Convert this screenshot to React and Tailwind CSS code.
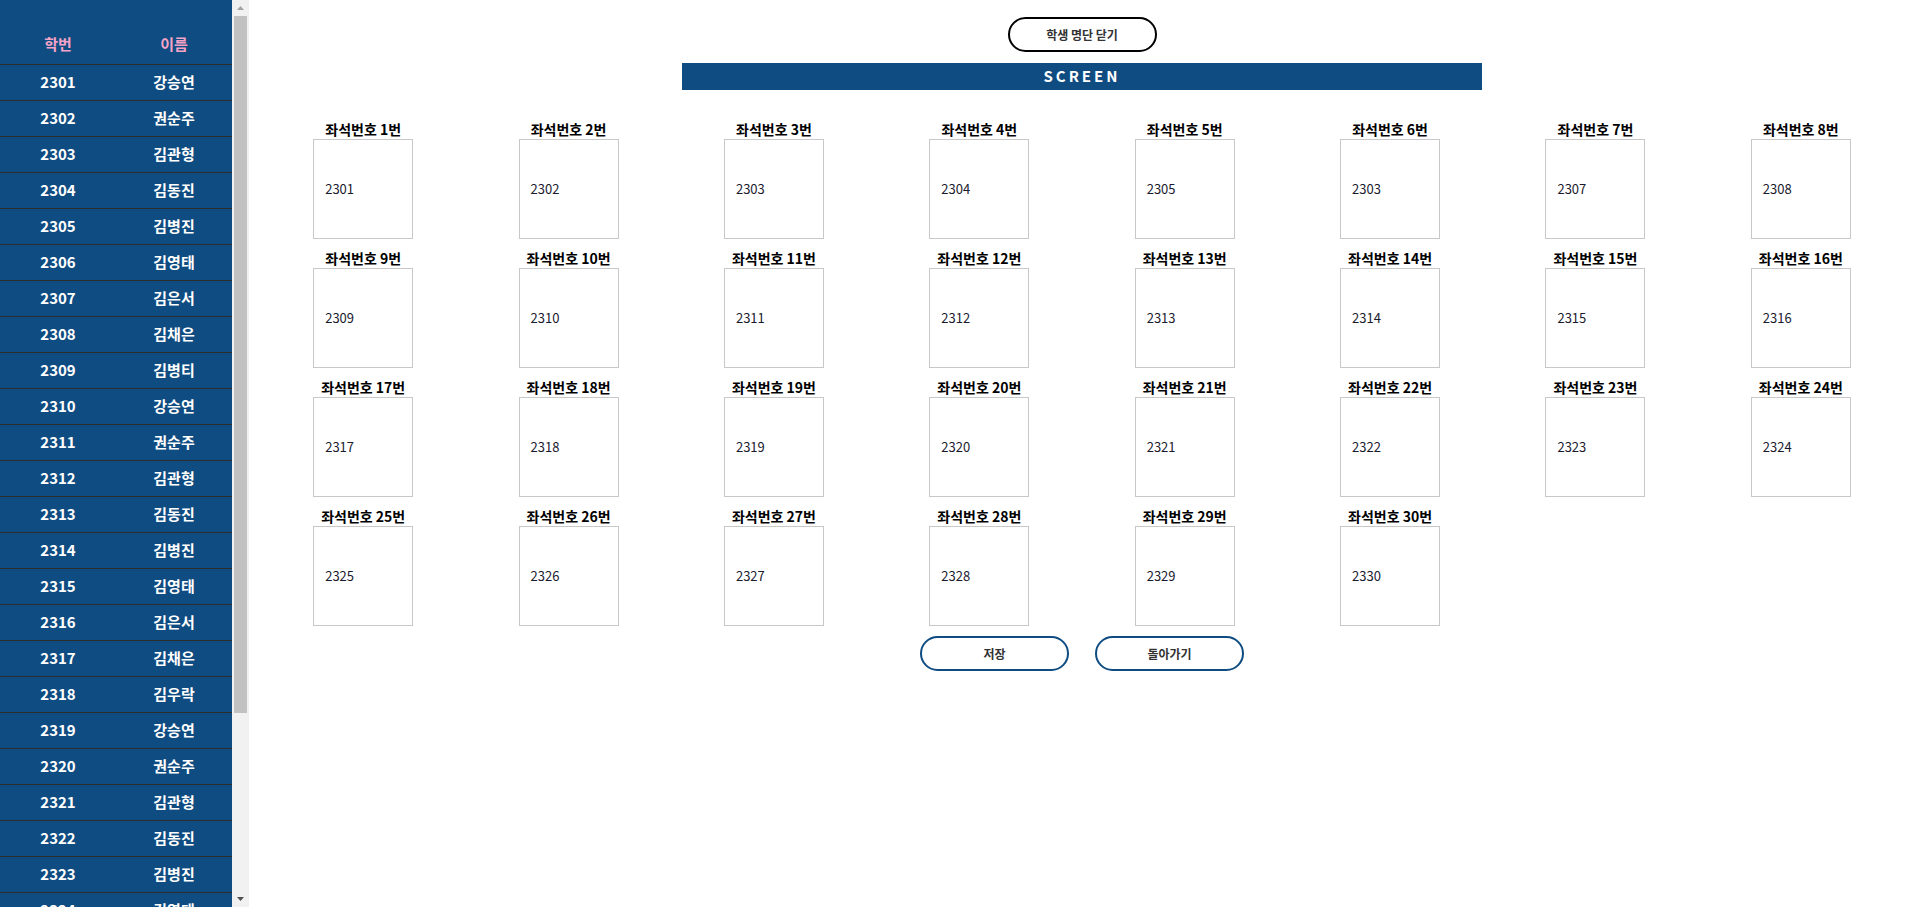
import React from 'react';

const font = { fontFamily: '"Noto Sans CJK KR", "Noto Sans", sans-serif' };

const names = [
  '강승연', '권순주', '김관형', '김동진', '김병진', '김영태', '김은서', '김채은', '김병티',
  '강승연', '권순주', '김관형', '김동진', '김병진', '김영태', '김은서', '김채은', '김우락',
  '강승연', '권순주', '김관형', '김동진', '김병진', '김영태', '김은서', '김채은', '김병티',
  '강승연', '권순주', '김관형',
];

const students = names.map((name, i) => ({ id: 2301 + i, name }));

const seats = Array.from({ length: 30 }, (_, i) => ({
  no: i + 1,
  student: i === 5 ? 2303 : 2301 + i,
}));

function Sidebar() {
  return (
    <div className="flex h-screen shrink-0">
      <aside className="w-[232px] h-full overflow-hidden bg-[#0f4c81]">
        <div className="flex h-[64px] items-end pb-[9px] text-[15px] font-bold text-[#f5a3c7]">
          <div className="w-1/2 text-center">학번</div>
          <div className="w-1/2 text-center">이름</div>
        </div>
        {students.map((s) => (
          <div key={s.id} className="flex h-[36px] items-center border-t border-[#2d2d2d] text-[15px] font-bold text-white">
            <div className="w-1/2 text-center">{s.id}</div>
            <div className="w-1/2 text-center">{s.name}</div>
          </div>
        ))}
      </aside>
      {/* scrollbar */}
      <div className="w-[17px] h-full bg-[#f1f1f1] flex flex-col items-center">
        <div className="h-[16px] flex items-center justify-center">
          <svg width="7" height="4" viewBox="0 0 7 4"><path d="M0 4 L3.5 0 L7 4 Z" fill="#a3a3a3" /></svg>
        </div>
        <div className="w-[13px] h-[697px] bg-[#c1c1c1]" />
        <div className="flex-1" />
        <div className="h-[16px] flex items-center justify-center">
          <svg width="7" height="4" viewBox="0 0 7 4"><path d="M0 0 L3.5 4 L7 0 Z" fill="#505050" /></svg>
        </div>
      </div>
    </div>
  );
}

function Seat({ no, student }) {
  return (
    <div className="flex flex-col items-center mb-[10px]">
      <div className="h-[19px] leading-[19px] text-[14px] font-bold text-black">좌석번호 {no}번</div>
      <div className="w-[100px] h-[100px] border border-[#c8c8c8] flex items-center pl-[11px] text-[13px] text-[#1a1a2e]">
        {student}
      </div>
    </div>
  );
}

export default function App() {
  return (
    <div className="flex h-screen overflow-hidden bg-white" style={font}>
      <Sidebar />
      <main className="flex-1 flex flex-col items-center pt-[17px]">
        <button className="w-[149px] h-[35px] rounded-full border-2 border-black text-[12px] font-bold text-[#333]">
          학생 명단 닫기
        </button>
        <div className="mt-[11px] w-[800px] h-[27px] bg-[#0f4c81] text-white text-[15px] font-bold tracking-[3px] flex items-center justify-center">
          SCREEN
        </div>
        <div className="mt-[30px] w-[1643px] grid grid-cols-8">
          {seats.map((s) => (
            <Seat key={s.no} {...s} />
          ))}
        </div>
        <div className="flex gap-[26px]">
          <button className="w-[149px] h-[35px] rounded-full border-2 border-[#0f4c81] text-[12px] font-bold text-[#333]">
            저장
          </button>
          <button className="w-[149px] h-[35px] rounded-full border-2 border-[#0f4c81] text-[12px] font-bold text-[#333]">
            돌아가기
          </button>
        </div>
      </main>
    </div>
  );
}
